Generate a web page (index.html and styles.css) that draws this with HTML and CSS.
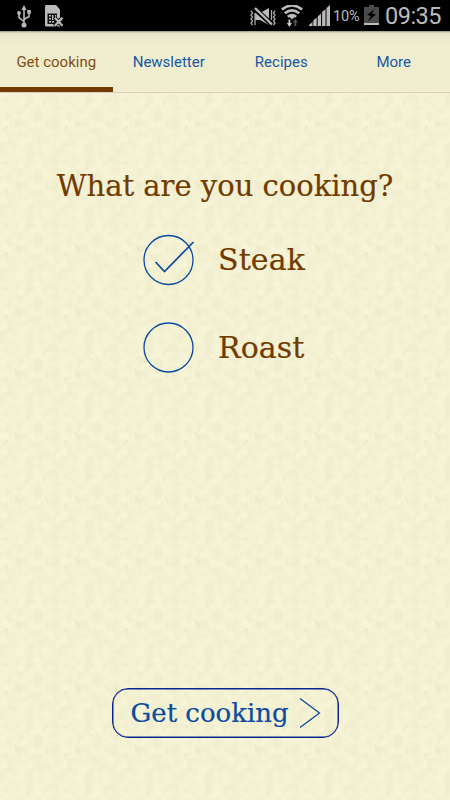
FILE: index.html
```html
<!DOCTYPE html>
<html lang="en">
<head>
  <meta charset="UTF-8">
  <title>Get cooking</title>
  <link rel="stylesheet" href="styles.css">
</head>
<body>
  <header class="status-bar">
    <svg class="icon-usb" width="14" height="24" viewBox="0 0 14 24" fill="#bbb">
      <path d="M7 0l2.600 5H4.400z"/>
      <circle cx="7" cy="20" r="2.500"/>
      <path d="M7 4v15M2 8v4.500l5 4M12 8v3.500l-5 3" fill="none" stroke="#bbb" stroke-width="1.600"/>
      <circle cx="2" cy="8" r="1.900"/>
      <rect x="10.200" y="5" width="3.600" height="3.600"/>
    </svg>
    <svg class="icon-sim" width="19" height="24" viewBox="0 0 19 24">
      <path d="M0 1.500Q0 0 1.500 0H11l4 4.500V21.500H1.500Q0 21.500 0 20z" fill="#bbb"/>
      <path d="M2.500 8.500H12V19H2.500z" fill="#111"/>
      <path d="M4 10h2v1.500H4zM7 10h1.500v5H7zM10 10h1.200v2H10zM4 13h2v1.500H4zM4 16h2v1.500H4zM7 16h2v1.500H7z" fill="#bbb"/>
      <path d="M9.500 12.500l8 8.500M17.500 12.500l-8 8.500" stroke="#000" stroke-width="4"/>
      <path d="M9.800 12.800l7.700 8M17.500 12.800l-7.700 8" stroke="#bbb" stroke-width="2.300"/>
    </svg>
    <svg class="icon-mute" width="26" height="20" viewBox="0 0 26 20">
      <path d="M5 6h5l9-5v17l-9-5H5z" fill="#bbb"/>
      <path d="M4 1l18 16.500" stroke="#000" stroke-width="5"/>
      <path d="M5 1l17 16.500" stroke="#bbb" stroke-width="2.400"/>
      <path d="M1 4l1.500 2L1 8l1.500 2L1 12l1.500 2L1 16l1.500 2M5 6v12M25 4l-1.500 2L25 8l-1.500 2L25 12l-1.500 2L25 16l-1.500 2M21.500 3v10" fill="none" stroke="#aaa" stroke-width="1.300"/>
    </svg>
    <svg class="icon-wifi" width="22" height="22" viewBox="0 0 22 22">
      <path d="M.8 4.500Q11-3.500 21.200 4.500M3.800 8.200Q11 2.500 18.200 8.200M6.800 11.800Q11 8.500 15.200 11.800" fill="none" stroke="#bbb" stroke-width="2.600"/>
      <path d="M8 11.500Q11 9.500 14 11.500L11 14.500z" fill="#bbb"/>
      <path d="M7.500 14.500h1.800v3.500h1.700l-2.600 4-2.600-4h1.700z" fill="#ccc"/>
      <path d="M13.500 21v-3.500h-1.700l2.600-3.500 2.600 3.500h-1.700V21z" fill="#555"/>
    </svg>
    <svg class="icon-signal" width="21" height="21" viewBox="0 0 21 21" fill="#bbb">
      <path d="M0 20l3.500-3V21H0zM4.300 15.500l3.400-3v8.500H4.300zM8.700 11.500l3.400-3V21H8.700zM13.100 7l3.400-3v17h-3.400zM17.500 3L21 0v21h-3.500z"/>
    </svg>
    <span class="battery-level">10%</span>
    <svg class="icon-battery" width="15" height="20" viewBox="0 0 15 20">
      <path d="M0 2h5V0h5v2h5v18H0z" fill="#4b4b4b"/>
      <path d="M0 18h15v2H0z" fill="#bbb"/>
      <path d="M10.500 4L3 10l4 1-3.500 5.500L12 9.500 8 8.500z" fill="#000"/>
    </svg>
    <span class="clock">09:35</span>
  </header>

  <nav class="tabs">
    <a class="tab active">Get cooking</a>
    <a class="tab">Newsletter</a>
    <a class="tab">Recipes</a>
    <a class="tab">More</a>
  </nav>

  <main class="content">
    <h1 class="title">What are you cooking?</h1>

    <div class="option">
      <svg class="radio" width="52" height="52" viewBox="0 0 52 52" fill="none" stroke="#0a4ba0">
        <circle cx="25.500" cy="26" r="24.500" stroke-width="1.300"/>
        <path d="M12.500 28l9 9.500L50.500 8" stroke-width="1.700"/>
      </svg>
      <span class="label">Steak</span>
    </div>

    <div class="option">
      <svg class="radio" width="52" height="52" viewBox="0 0 52 52" fill="none" stroke="#0a4ba0">
        <circle cx="25.500" cy="25.500" r="24.500" stroke-width="1.300"/>
      </svg>
      <span class="label">Roast</span>
    </div>

    <button class="start">
      <span>Get cooking</span>
      <svg width="22" height="32" viewBox="0 0 22 32" fill="none" stroke="#0a4ba0" stroke-width="1.300">
        <path d="M1 1.500l19.500 14.500L1 30.500"/>
      </svg>
    </button>
  </main>
</body>
</html>
```

FILE: styles.css
```css
body {
  margin: 0;
  height: 800px;
  display: flex;
  flex-direction: column;
  overflow: hidden;
  font-family: Roboto, sans-serif;
  background-color: #f7f4d7;
  /* paper grain, one repeating tile */
  background-image: url("data:image/svg+xml,%3Csvg xmlns='http://www.w3.org/2000/svg' width='60' height='62.700' viewBox='0 0 60 62.700'%3E%3Cfilter id='n' x='0' y='0' width='100%25' height='100%25' color-interpolation-filters='sRGB'%3E%3CfeTurbulence type='fractalNoise' baseFrequency='.12' numOctaves='3' seed='4' stitchTiles='stitch'/%3E%3CfeColorMatrix values='0 0 0 0 .8 0 0 0 0 .8 0 0 0 0 .62 .32 0 0 0 -.09'/%3E%3C/filter%3E%3Crect width='60' height='62.700' filter='url(%23n)'/%3E%3Cg fill='none' stroke='%23887f55' stroke-opacity='.1'%3E%3Cpath d='M14 33l6 8M45 35l3 7M4 45l4-3M31 24l2 1M7 15v2M50 31l2 1'/%3E%3C/g%3E%3C/svg%3E");
  background-size: 60px 62.7px;
  background-position: 0 22px;
}

.status-bar {
  height: 31px;
  display: flex;
  align-items: flex-start;
  box-sizing: border-box;
  padding: 5px 0 0 17px;
  background: #000;
  color: #bbb;
}

.icon-sim {
  margin-left: 14px;
}

.icon-mute {
  margin: 2px 0 0 186px;
}

.icon-wifi {
  margin-left: 5px;
}

.icon-signal {
  margin-left: 6px;
}

.battery-level {
  width: 28px;
  margin: 4px 0 0 3px;
  font-size: 14.5px;
  line-height: 16px;
  letter-spacing: -0.1px;
}

.icon-battery {
  margin-left: 3px;
}

.clock {
  margin: -3px 0 0 6px;
  font-size: 23.5px;
  line-height: 28px;
  letter-spacing: -0.5px;
}

.tabs {
  height: 62px;
  display: grid;
  grid-template-columns: repeat(4, 1fr);
  box-sizing: border-box;
  border-bottom: 1px solid #dccfc0;
  background: linear-gradient(#9a9888, #e3e0c5 2px, #eeeace 8px, #f1edcf 14px) padding-box;
}

.tab {
  height: 61px;
  box-sizing: border-box;
  border-bottom: 5px solid transparent;
  padding-top: 2px;
  text-align: center;
  font-size: 15px;
  line-height: 58px;
  color: #1659a5;
}

.tab.active {
  color: #804d12;
  border-bottom-color: #713b00;
}

.content {
  flex: 1;
  display: flex;
  flex-direction: column;
  align-items: center;
  font-family: "DejaVu Serif", serif;
  -webkit-text-stroke: 0.2px currentColor;
}

.title {
  margin: 73px 0 0;
  font-size: 29px;
  font-weight: normal;
  line-height: 40px;
  color: #713b00;
  white-space: nowrap;
}

.option {
  width: 164px;
  height: 52px;
  display: flex;
  align-items: center;
  margin-top: 28px;
}

.option + .option {
  margin-top: 36px;
}

.label {
  margin-left: 23px;
  font-size: 30px;
  line-height: 40px;
  letter-spacing: 0.1px;
  color: #713b00;
}

.start {
  width: 227px;
  height: 50px;
  display: flex;
  align-items: center;
  box-sizing: border-box;
  margin: auto 0 62px;
  padding: 0 17px 0 18px;
  border: 1px solid #0b2590;
  border-radius: 16px;
  box-shadow: inset 0 0 0 0.5px #0b2590;
  background: none;
  color: #0a4ba0;
  font-family: inherit;
  font-size: 26px;
  white-space: nowrap;
}

.start svg {
  margin-left: auto;
}
```
